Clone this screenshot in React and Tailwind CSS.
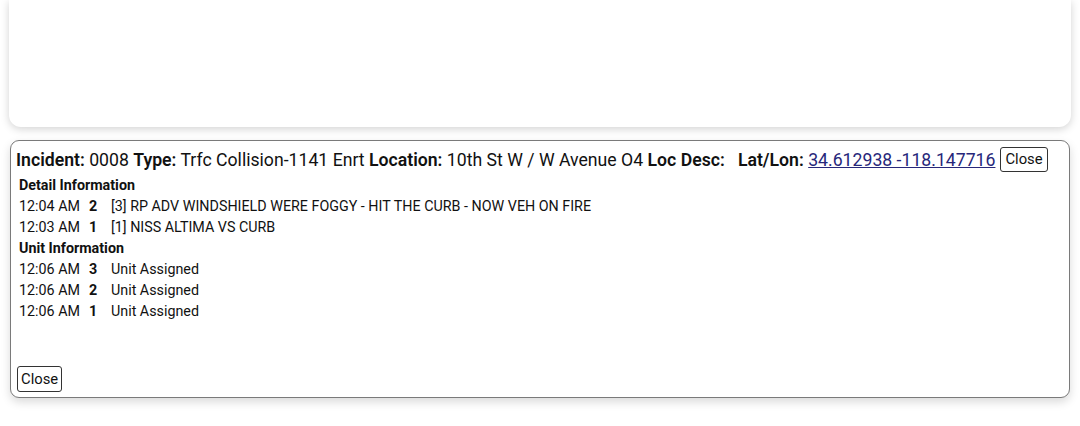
import React from "react";

const details = [
  { time: "12:04 AM", n: "2", text: "[3] RP ADV WINDSHIELD WERE FOGGY - HIT THE CURB - NOW VEH ON FIRE" },
  { time: "12:03 AM", n: "1", text: "[1] NISS ALTIMA VS CURB" },
];

const units = [
  { time: "12:06 AM", n: "3", text: "Unit Assigned" },
  { time: "12:06 AM", n: "2", text: "Unit Assigned" },
  { time: "12:06 AM", n: "1", text: "Unit Assigned" },
];

function Row({ time, n, text }) {
  return (
    <div className="flex h-[21px] items-center">
      <span className="w-[70px]">{time}</span>
      <span className="w-[22px] font-bold">{n}</span>
      <span>{text}</span>
    </div>
  );
}

export default function App() {
  return (
    <div className="min-h-[426px] bg-white font-['Roboto',sans-serif] text-[#111]">
      {/* top panel (cut off) */}
      <div className="mx-[9px] h-[127px] rounded-b-[12px] bg-white shadow-[0_2px_8px_rgba(0,0,0,0.18)]" />

      {/* incident panel */}
      <div className="mx-[10px] mt-[13px] h-[258px] rounded-[9px] border border-[#7a7a7a] bg-white shadow-[0_4px_10px_rgba(0,0,0,0.15)]">
        <div className="flex items-center pl-[5px] pt-[6px] text-[17.66px] leading-[24px]">
          <span>
            <b className="font-semibold">Incident:</b> 0008 <b className="font-semibold">Type:</b> Trfc Collision-1141 Enrt{" "}
            <b className="font-semibold">Location:</b> 10th St W / W Avenue O4 <b className="font-semibold">Loc Desc:</b>&nbsp;&nbsp;{" "}
            <b className="font-semibold">Lat/Lon:</b>{" "}
            <a href="#" className="text-[#27277a] underline">34.612938 -118.147716</a>
          </span>
          <button className="ml-[5px] rounded-[3px] border border-[#333] px-[4px] text-[14.8px] leading-[23px]">
            Close
          </button>
        </div>
        <div className="pl-[8px] pt-[3px] text-[14.3px]">
          <div className="flex h-[21px] items-center font-bold">Detail Information</div>
          {details.map((d, i) => (
            <Row key={i} {...d} />
          ))}
          <div className="flex h-[21px] items-center font-bold">Unit Information</div>
          {units.map((d, i) => (
            <Row key={i} {...d} />
          ))}
        </div>
        <div className="pl-[6px] pt-[44px]">
          <button className="rounded-[3px] border border-[#333] px-[3px] text-[14.8px] leading-[24px]">Close</button>
        </div>
      </div>
    </div>
  );
}
